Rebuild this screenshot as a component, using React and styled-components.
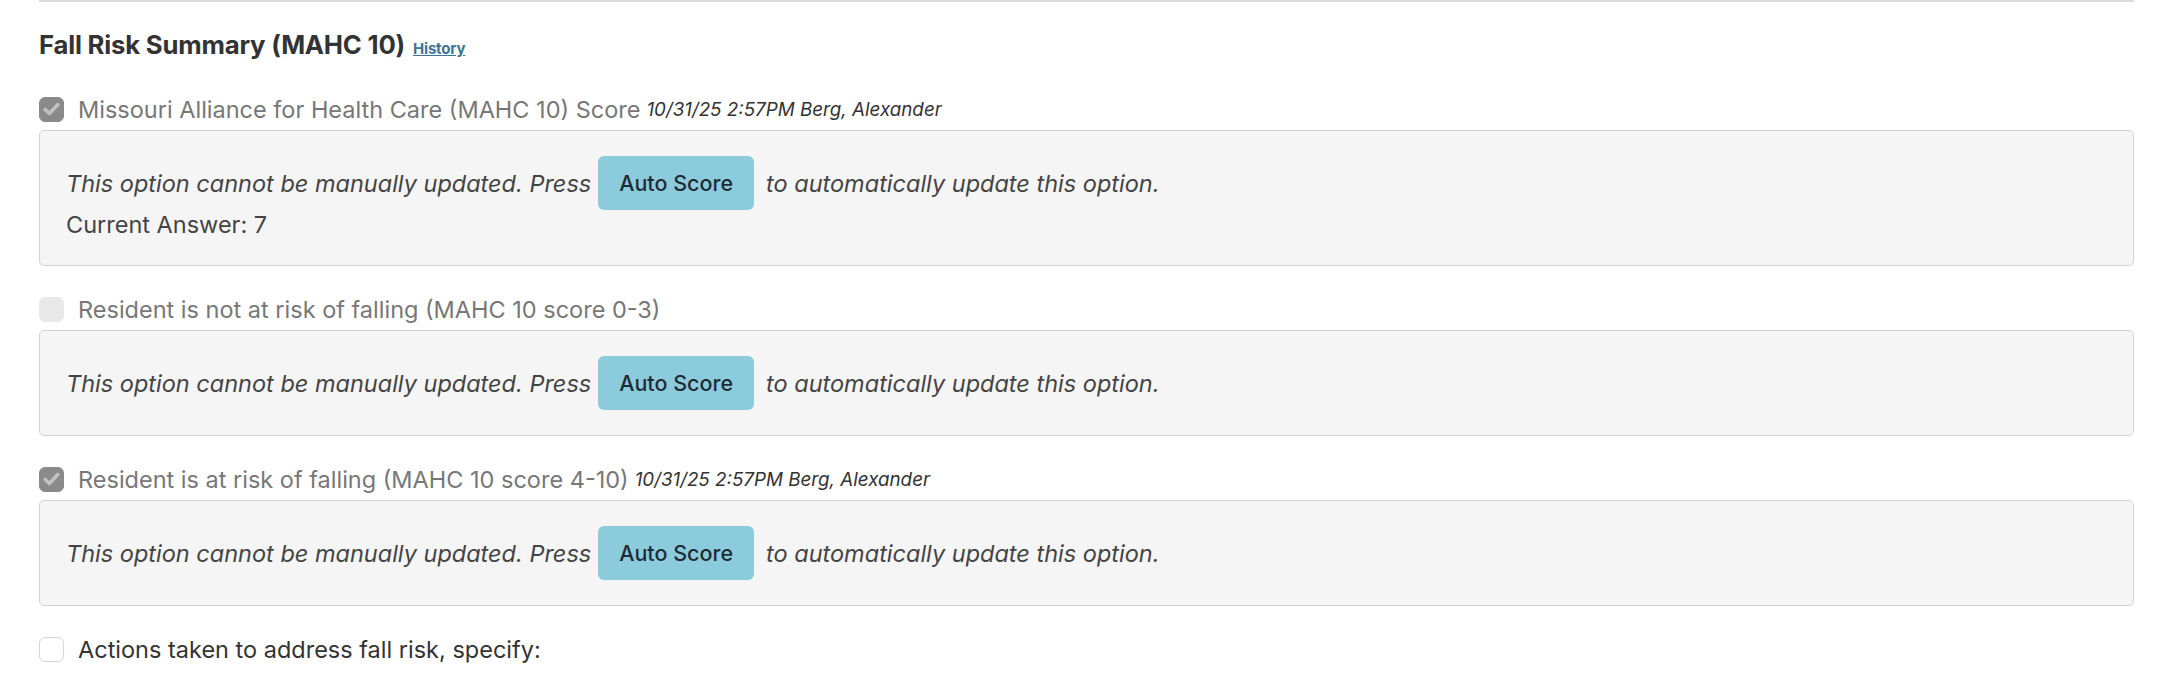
import React from "react";
import styled, { createGlobalStyle } from "styled-components";

const GlobalStyle = createGlobalStyle`
  html, body {
    margin: 0;
    padding: 0;
    background: #ffffff;
  }
  body {
    font-family: "Inter", "Liberation Sans", sans-serif;
    color: #333333;
  }
`;

const Page = styled.div`
  padding: 0 38px 0 39px;
`;

const Section = styled.section`
  border-top: 2px solid #dcdcdc;
  padding-top: 28px;
`;

const Heading = styled.h2`
  margin: 0 0 32px;
  display: flex;
  align-items: baseline;
  gap: 8px;
  font-size: 25.7px;
  font-weight: 700;
  letter-spacing: -0.2px;
  color: #333333;
  line-height: 30px;
`;

const HistoryLink = styled.a`
  font-size: 15px;
  font-weight: 700;
  letter-spacing: -0.2px;
  color: #3f7394;
  text-decoration: underline;
  cursor: pointer;
`;

const Question = styled.div`
  margin-bottom: 30px;
`;

const OptionRow = styled.label`
  display: flex;
  align-items: center;
  gap: 14px;
  height: 26px;
  margin-bottom: 8px;
  font-size: 23.5px;
  color: ${(p) => (p.disabled ? "#777777" : "#333333")};
`;

const Box = styled.span`
  flex: none;
  width: 25px;
  height: 25px;
  border-radius: 6px;
  box-sizing: border-box;
  display: flex;
  align-items: center;
  justify-content: center;
  background: ${(p) =>
    p.checked ? "#8a8a8a" : p.disabled ? "#e8e8e8" : "#ffffff"};
  border: 1px solid
    ${(p) => (p.checked ? "#8a8a8a" : p.disabled ? "#e8e8e8" : "#d6d6d6")};
`;

const Stamp = styled.span`
  font-size: 18.8px;
  font-style: italic;
  color: #333333;
  margin-left: -8px;
`;

const Panel = styled.div`
  background: #f5f5f5;
  border: 1px solid #d3d3d3;
  border-radius: 5px;
  padding: 25px 26px;
`;

const Line = styled.div`
  display: flex;
  align-items: center;
  font-size: 23.5px;
  font-style: italic;
  color: #444444;
`;

const AutoButton = styled.button`
  height: 54px;
  padding: 0 21px;
  margin: 0 12px 0 7px;
  border: none;
  border-radius: 6px;
  background: #8ccbdc;
  color: #1e2b36;
  font-family: "Inter", "Liberation Sans", sans-serif;
  font-size: 21.5px;
  font-weight: 500;
  font-style: normal;
  cursor: pointer;
`;

const Answer = styled.div`
  font-size: 23.5px;
  color: #444444;
  line-height: 30px;
`;

const Check = () => (
  <svg width="17" height="14" viewBox="0 0 17 14">
    <path
      d="M2.2 7.4 L6.4 11.6 L14.8 2.6"
      fill="none"
      stroke="#c2c2c2"
      strokeWidth="3.6"
      strokeLinecap="round"
      strokeLinejoin="round"
    />
  </svg>
);

const questions = [
  {
    label: "Missouri Alliance for Health Care (MAHC 10) Score",
    checked: true,
    stamp: "10/31/25 2:57PM Berg, Alexander",
    answer: "Current Answer: 7",
  },
  {
    label: "Resident is not at risk of falling (MAHC 10 score 0-3)",
    checked: false,
  },
  {
    label: "Resident is at risk of falling (MAHC 10 score 4-10)",
    checked: true,
    stamp: "10/31/25 2:57PM Berg, Alexander",
  },
];

const App = () => {
  return (
    <Page>
      <GlobalStyle />
      <Section>
        <Heading>
          Fall Risk Summary (MAHC 10) <HistoryLink>History</HistoryLink>
        </Heading>
        {questions.map((q) => (
          <Question key={q.label}>
            <OptionRow disabled>
              <Box checked={q.checked} disabled>
                {q.checked && <Check />}
              </Box>
              {q.label}
              {q.stamp && <Stamp>{q.stamp}</Stamp>}
            </OptionRow>
            <Panel>
              <Line>
                This option cannot be manually updated. Press
                <AutoButton>Auto Score</AutoButton>
                to automatically update this option.
              </Line>
              {q.answer && <Answer>{q.answer}</Answer>}
            </Panel>
          </Question>
        ))}
        <OptionRow>
          <Box />
          Actions taken to address fall risk, specify:
        </OptionRow>
      </Section>
    </Page>
  );
};

export default App;
